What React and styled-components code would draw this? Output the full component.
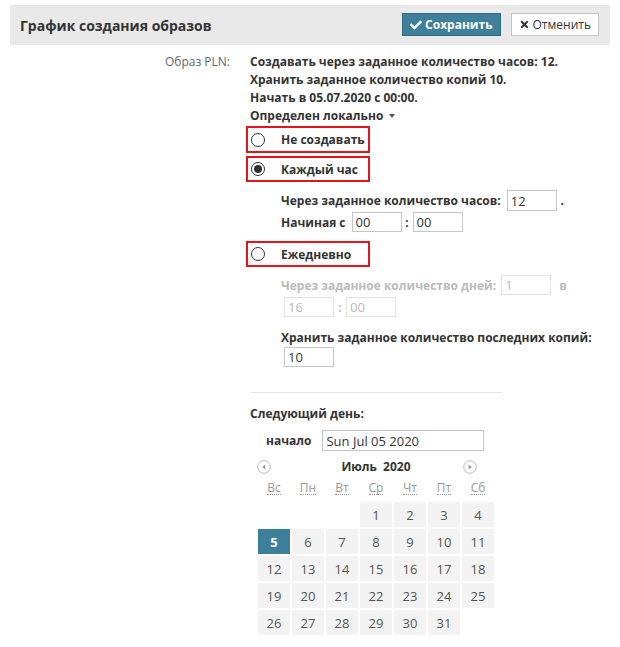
import React from 'react';
import styled, { createGlobalStyle } from 'styled-components';
import { FaCheck, FaTimes } from 'react-icons/fa';

const GlobalStyle = createGlobalStyle`
  body {
    margin: 0;
    font-family: "Open Sans", "Liberation Sans", sans-serif;
    font-size: 12px;
    color: #333;
    background: #fff;
  }
`;

const Page = styled.div`
  width: 620px;
  padding: 5px 10px;
  box-sizing: border-box;
`;

const Header = styled.div`
  display: flex;
  align-items: center;
  justify-content: space-between;
  height: 40px;
  background: #e9e9e9;
  padding: 0 11px 0 10px;
`;

const Title = styled.h1`
  margin: 0;
  font-size: 14px;
  font-weight: 700;
  color: #333;
`;

const Buttons = styled.div`
  display: flex;
  gap: 10px;
  margin-top: -1px;
`;

const Button = styled.button`
  display: flex;
  align-items: center;
  gap: 3px;
  height: 23px;
  padding: 0 7px;
  font-family: "Open Sans", "Liberation Sans", sans-serif;
  font-size: 12px;
  font-weight: ${p => (p.$primary ? 700 : 400)};
  color: ${p => (p.$primary ? '#fff' : '#333')};
  background: ${p => (p.$primary ? '#3e7f9a' : '#fff')};
  border: 1px solid ${p => (p.$primary ? '#2f6a82' : '#c4c4c4')};
  border-radius: 0;
  svg {
    font-size: ${p => (p.$primary ? 12 : 11)}px;
  }
`;

const FormRow = styled.div`
  display: grid;
  grid-template-columns: 220px 1fr;
  column-gap: 20px;
  padding-top: 8px;
`;

const Label = styled.div`
  text-align: right;
  line-height: 18px;
  color: #666;
`;

const Content = styled.div`
  display: flex;
  flex-direction: column;
  align-items: flex-start;
`;

const Line = styled.div`
  line-height: 18px;
  font-weight: 700;
  color: ${p => (p.$disabled ? '#bbb' : '#333')};
`;

const Caret = styled.span`
  display: inline-block;
  margin-left: 6px;
  vertical-align: middle;
  border-left: 3.5px solid transparent;
  border-right: 3.5px solid transparent;
  border-top: 4px solid #555;
  position: relative;
  top: -1px;
`;

const RadioBox = styled.label`
  display: flex;
  align-items: center;
  box-sizing: border-box;
  width: 124px;
  height: ${p => p.$h || 26}px;
  margin: ${p => p.$mt || 0}px 0 0 -4px;
  padding-left: 3px;
  border: 2px solid #e5141b;
  font-weight: 700;
  font-size: 12px;
`;

const Radio = styled.span`
  position: relative;
  box-sizing: border-box;
  width: 14px;
  height: 14px;
  border: 1px solid #333;
  border-radius: 50%;
  margin-right: 16px;
  &::after {
    content: '';
    display: ${p => (p.$checked ? 'block' : 'none')};
    position: absolute;
    left: 2px;
    top: 2px;
    width: 8px;
    height: 8px;
    border-radius: 50%;
    background: #333;
  }
`;

const Sub = styled.div`
  display: flex;
  flex-direction: column;
  align-items: flex-start;
  margin: ${p => p.$mt || 0}px 0 0 31px;
  color: ${p => (p.$disabled ? '#bbb' : '#333')};
`;

const InputRow = styled.div`
  display: flex;
  align-items: center;
  font-weight: 700;
  margin-top: ${p => p.$mt || 0}px;
`;

const Field = styled.input`
  box-sizing: border-box;
  width: ${p => p.$w || 50}px;
  height: ${p => p.$h || 21}px;
  margin-left: ${p => p.$ml || 0}px;
  padding: 0 3px;
  border: 1px solid ${p => (p.disabled ? '#e2e2e2' : '#c6c6c6')};
  background: #fff;
  font-family: "Open Sans", "Liberation Sans", sans-serif;
  font-size: 13px;
  color: ${p => (p.disabled ? '#bbb' : '#333')};
  outline: none;
`;

const Sep = styled.span`
  display: inline-block;
  width: ${p => p.$w || 11}px;
  text-align: center;
  font-weight: 700;
`;

const Divider = styled.div`
  width: 253px;
  height: 1px;
  background: #e6e6e6;
  margin-top: 25px;
`;

const StartRow = styled.div`
  display: flex;
  align-items: center;
  margin: 7px 0 0 16px;
  gap: 11px;
  font-weight: 700;
`;

const Calendar = styled.div`
  margin: 7px 0 0 7px;
  width: 238px;
`;

const MonthBar = styled.div`
  display: grid;
  grid-template-columns: 1fr auto 1fr;
  align-items: center;
  height: 16px;
  font-weight: 700;
  font-size: 12px;
  word-spacing: 3px;
`;

const NavIcon = styled.svg`
  justify-self: ${p => (p.$right ? 'end' : 'start')};
  margin-right: ${p => (p.$right ? 18 : 0)}px;
`;

const Grid = styled.div`
  display: grid;
  grid-template-columns: repeat(7, 32px);
  grid-auto-rows: 25px;
  gap: 2px;
  margin-left: 1px;
`;

const WeekRow = styled.div`
  display: grid;
  grid-template-columns: repeat(7, 32px);
  gap: 2px;
  margin: 5px 0 5px 1px;
  height: 18px;
  align-items: center;
`;

const Weekday = styled.abbr`
  justify-self: center;
  color: #999;
  font-size: 12px;
  text-decoration: none;
  border-bottom: 1px dotted #999;
  line-height: 13px;
`;

const Day = styled.div`
  display: flex;
  align-items: center;
  justify-content: center;
  background: ${p => (p.$active ? '#3e7f9a' : p.$empty ? 'transparent' : '#f3f3f3')};
  color: ${p => (p.$active ? '#fff' : '#555')};
  font-weight: ${p => (p.$active ? 700 : 400)};
  font-size: 13px;
`;

const Arrow = ({ right }) => (
  <NavIcon $right={right} width="14" height="14" viewBox="0 0 14 14">
    <circle cx="7" cy="7" r="6.3" fill="#fff" stroke="#bbb" strokeWidth="1" />
    {right ? (
      <path d="M5.6 4.6 L8.8 7 L5.6 9.4 Z" fill="#999" />
    ) : (
      <path d="M8.4 4.6 L5.2 7 L8.4 9.4 Z" fill="#999" />
    )}
  </NavIcon>
);

const weekdays = ['Вс', 'Пн', 'Вт', 'Ср', 'Чт', 'Пт', 'Сб'];
const days = [null, null, null, ...Array.from({ length: 31 }, (_, i) => i + 1)];

export default function App() {
  return (
    <Page>
      <GlobalStyle />
      <Header>
        <Title>График создания образов</Title>
        <Buttons>
          <Button $primary><FaCheck />Сохранить</Button>
          <Button><FaTimes />Отменить</Button>
        </Buttons>
      </Header>

      <FormRow>
        <Label>Образ PLN:</Label>
        <Content>
          <Line>Создавать через заданное количество часов: 12.</Line>
          <Line>Хранить заданное количество копий 10.</Line>
          <Line>Начать в 05.07.2020 с 00:00.</Line>
          <Line>Определен локально<Caret /></Line>

          <RadioBox $mt={1} $h={27}><Radio />Не создавать</RadioBox>
          <RadioBox $mt={3}><Radio $checked />Каждый час</RadioBox>

          <Sub $mt={8}>
            <InputRow>
              Через заданное количество часов:
              <Field $ml={6} defaultValue="12" />
              <Sep $w={11}>.</Sep>
            </InputRow>
            <InputRow $mt={1}>
              Начиная с
              <Field $ml={6} $h={20} defaultValue="00" />
              <Sep>:</Sep>
              <Field $h={20} defaultValue="00" />
            </InputRow>
          </Sub>

          <RadioBox $mt={9}><Radio />Ежедневно</RadioBox>

          <Sub $mt={8} $disabled>
            <InputRow>
              Через заданное количество дней:
              <Field $ml={5} $h={20} defaultValue="1" disabled />
              <Sep $w={24}>в</Sep>
            </InputRow>
            <InputRow $mt={2}>
              <Field $ml={3} $h={20} defaultValue="16" disabled />
              <Sep $w={12}>:</Sep>
              <Field $h={20} defaultValue="00" disabled />
            </InputRow>
          </Sub>

          <Sub $mt={12}>
            <Line>Хранить заданное количество последних копий:</Line>
            <Field $ml={3} $h={20} defaultValue="10" />
          </Sub>

          <Divider />

          <Line style={{ marginTop: 12 }}>Следующий день:</Line>
          <StartRow>
            начало
            <Field $w={162} defaultValue="Sun Jul 05 2020" />
          </StartRow>

          <Calendar>
            <MonthBar>
              <Arrow />
              <span>Июль 2020</span>
              <Arrow right />
            </MonthBar>
            <WeekRow>
              {weekdays.map(w => <Weekday key={w}>{w}</Weekday>)}
            </WeekRow>
            <Grid>
              {days.map((d, i) => (
                <Day key={i} $empty={!d} $active={d === 5}>{d}</Day>
              ))}
            </Grid>
          </Calendar>
        </Content>
      </FormRow>
    </Page>
  );
}
